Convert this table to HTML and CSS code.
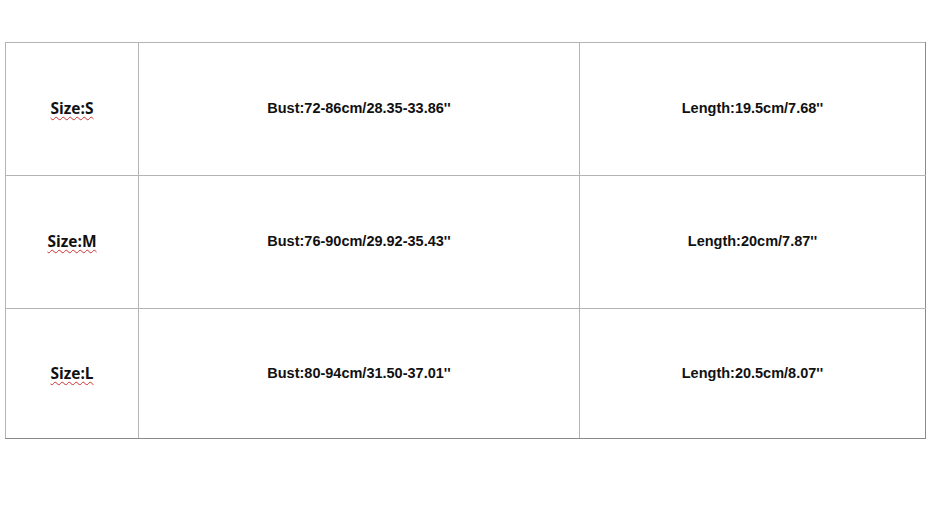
FILE: index.html
```html
<!DOCTYPE html>
<html>
<head>
<meta charset="utf-8">
<link rel="stylesheet" href="styles.css">
</head>
<body>
<table class="size-table">
  <colgroup>
    <col class="c1"><col class="c2"><col class="c3">
  </colgroup>
  <tr class="row">
    <td class="size"><span class="spell">Size:S</span></td>
    <td>Bust:72-86cm/28.35-33.86''</td>
    <td>Length:19.5cm/7.68''</td>
  </tr>
  <tr class="row">
    <td class="size"><span class="spell">Size:M</span></td>
    <td>Bust:76-90cm/29.92-35.43''</td>
    <td>Length:20cm/7.87''</td>
  </tr>
  <tr class="row last">
    <td class="size"><span class="spell">Size:L</span></td>
    <td>Bust:80-94cm/31.50-37.01''</td>
    <td>Length:20.5cm/8.07''</td>
  </tr>
</table>
</body>
</html>
```
FILE: styles.css
```css
html, body {
  margin: 0;
  padding: 0;
  background: #ffffff;
}
.size-table {
  margin: 42px 0 0 5px;
  border-collapse: collapse;
  table-layout: fixed;
  width: 920px;
  font-family: "Liberation Sans", Arial, sans-serif;
  font-weight: bold;
  font-size: 14.5px;
  color: #111;
}
.c1 { width: 133px; }
.c2 { width: 441px; }
.c3 { width: 346px; }
.size-table td {
  border: 1px solid #b4b4b4;
  text-align: center;
  vertical-align: middle;
  padding: 0 0 2px 0;
  height: 130px;
}
.size-table .last td {
  height: 127px;
}
.size-table td:last-child {
  border-right-color: #8a8a8a;
}
.size-table .last td {
  border-bottom-color: #8a8a8a;
}
.size {
  font-family: "Open Sans", "Liberation Sans", sans-serif;
  font-size: 15.5px;
}
.spell {
  text-decoration: underline wavy #d03030;
  text-decoration-thickness: 1px;
  text-underline-offset: 2px;
}
```
